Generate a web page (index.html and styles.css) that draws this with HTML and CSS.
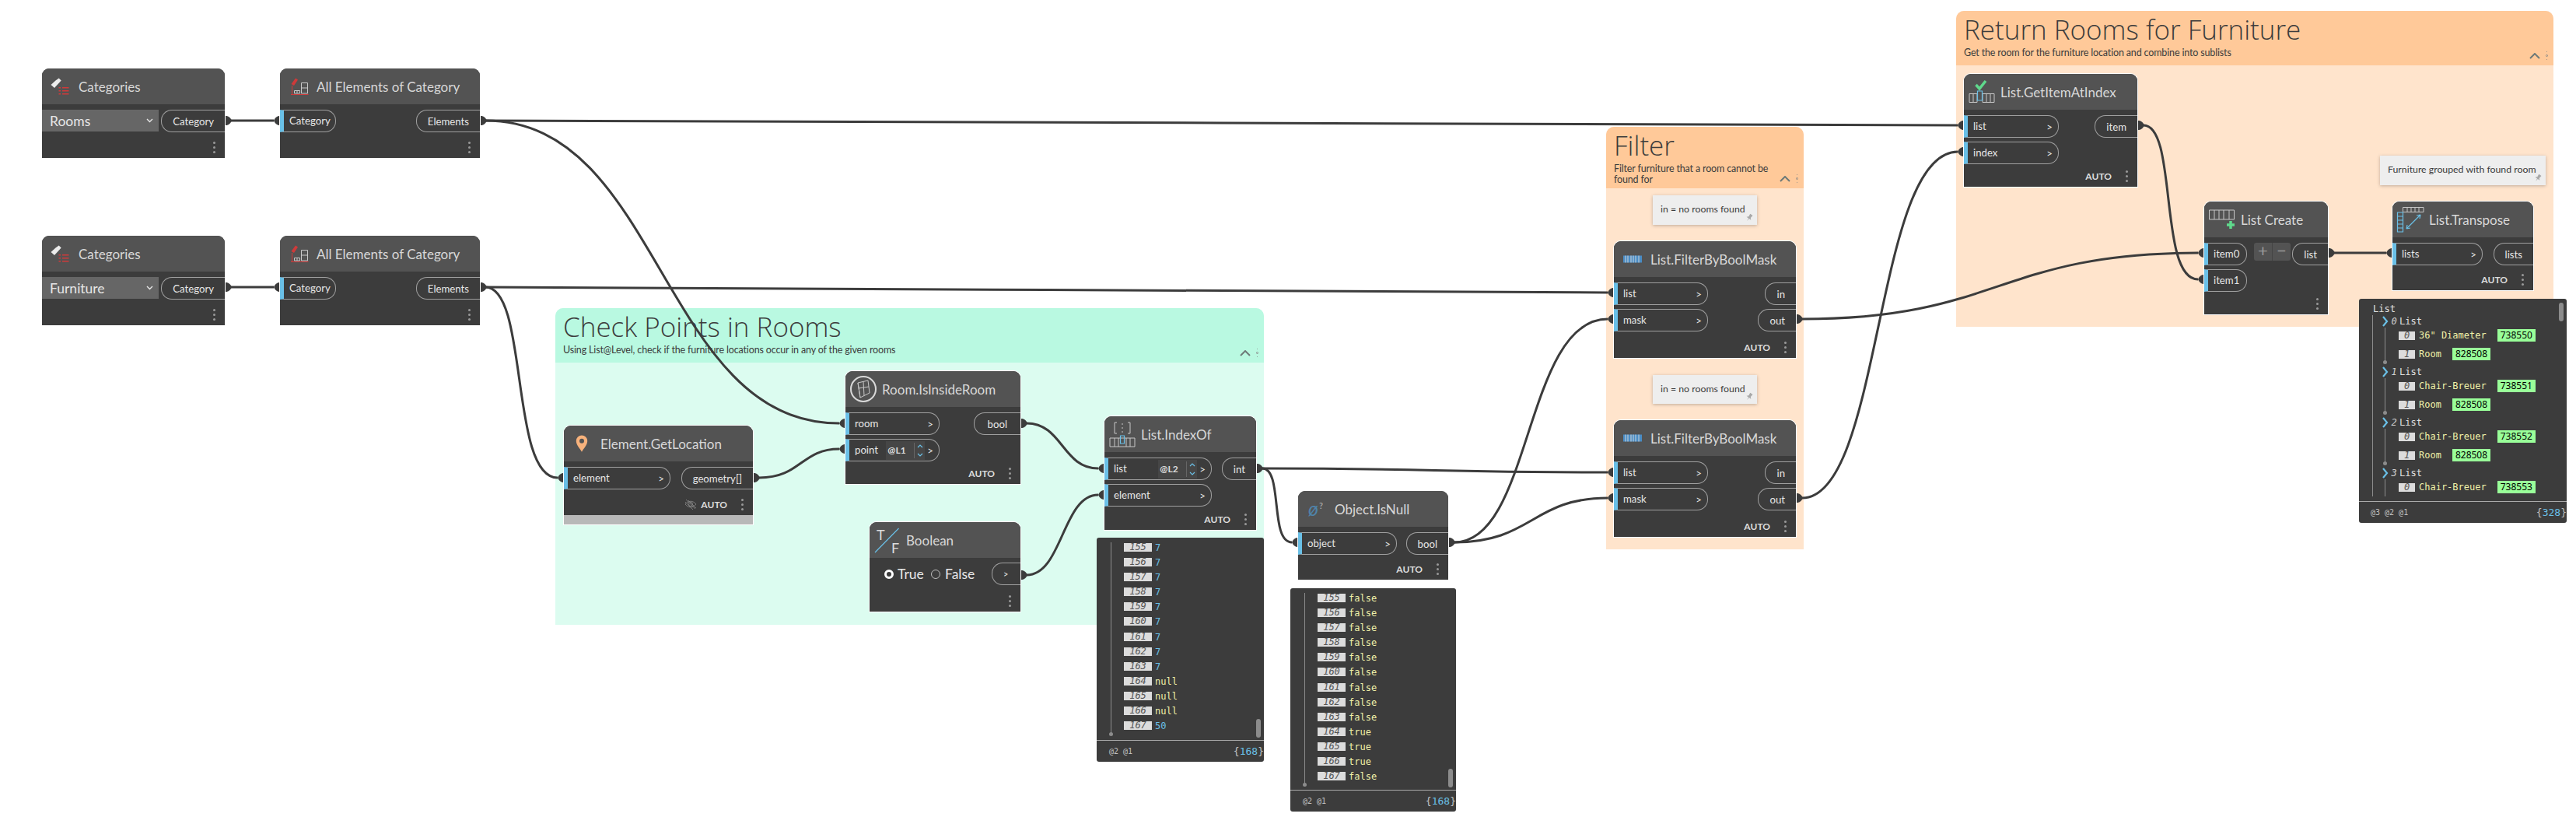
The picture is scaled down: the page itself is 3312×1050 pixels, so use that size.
FILE: index.html
```html
<!DOCTYPE html>
<html lang="en">
  <head>
    <meta charset="UTF-8" />
    <meta name="viewport" content="width=device-width" />
    <title>Return Rooms for Furniture</title>
    <link rel="stylesheet" href="styles.css">
  </head>
  <body>
    <div class="canvas">
      <!-- groups -->
      <section class="grp grp-green g-check">
        <div class="grp-head">
          <div class="grp-text">
            <h2>Check Points in Rooms</h2>
            <p>Using List@Level, check if the furniture locations occur in any of the given rooms</p>
          </div>
          <div class="grp-tools"><svg class="chev" width="14" height="8" viewBox="0 0 14 8"><path d="M1 7l6-6 6 6"/></svg><span class="grp-dots"></span></div>
        </div>
      </section>
      <section class="grp grp-orange g-filter">
        <div class="grp-head">
          <div class="grp-text">
            <h2>Filter</h2>
            <p>Filter furniture that a room cannot be<br>found for</p>
          </div>
          <div class="grp-tools"><svg class="chev" width="14" height="8" viewBox="0 0 14 8"><path d="M1 7l6-6 6 6"/></svg><span class="grp-dots"></span></div>
        </div>
      </section>
      <section class="grp grp-orange g-return">
        <div class="grp-head">
          <div class="grp-text">
            <h2>Return Rooms for Furniture</h2>
            <p>Get the room for the furniture location and combine into sublists</p>
          </div>
          <div class="grp-tools"><svg class="chev" width="14" height="8" viewBox="0 0 14 8"><path d="M1 7l6-6 6 6"/></svg><span class="grp-dots"></span></div>
        </div>
      </section>

      <!-- wires, in canvas coordinates -->
      <svg class="wires" width="3312" height="1050" viewBox="0 0 3312 1050">
        <defs>
          <path id="knob-out" d="M0-6h1.500Q6-5 8 0 6 5 1.500 6H0z"/>
          <path id="knob-in" d="M8-6H6.500Q2-5 0 0 2 5 6.500 6H8z"/>
        </defs>
        <g class="wire">
          <path d="M296 155H352"/>
          <path d="M296 369H352"/>
          <path d="M624 155C1570 155 1570 161 2517 161"/>
          <path d="M624 155C850 155 850 544 1079 544"/>
          <path d="M624 369C680 369 655 614 717 614"/>
          <path d="M624 369C1345 369 1345 376 2067 376"/>
          <path d="M976 614C1030 614 1030 577 1079 577"/>
          <path d="M1320 544C1366 544 1366 602 1412 602"/>
          <path d="M1320 739C1366 739 1366 636 1412 636"/>
          <path d="M1623 602C1845 602 1845 607 2067 607"/>
          <path d="M1623 602C1650 602 1632 697 1661 697"/>
          <path d="M1870 697C1970 697 1960 410 2067 410"/>
          <path d="M1870 697C1970 697 1970 640 2067 640"/>
          <path d="M2317 410C2570 410 2570 325 2826 325"/>
          <path d="M2317 640C2420 640 2410 195 2517 195"/>
          <path d="M2756 161C2800 161 2775 359 2826 359"/>
          <path d="M3001 325H3068"/>
        </g>
        <g class="knobs">
          <use href="#knob-out" x="290" y="155"/><use href="#knob-in" x="352" y="155"/>
          <use href="#knob-out" x="290" y="369"/><use href="#knob-in" x="352" y="369"/>
          <use href="#knob-out" x="618" y="155"/><use href="#knob-out" x="618" y="369"/>
          <use href="#knob-in" x="717" y="614"/><use href="#knob-out" x="969" y="614"/>
          <use href="#knob-in" x="1079" y="544"/><use href="#knob-in" x="1079" y="577"/>
          <use href="#knob-out" x="1313" y="544"/><use href="#knob-out" x="1313" y="739"/>
          <use href="#knob-in" x="1412" y="602"/><use href="#knob-in" x="1412" y="636"/>
          <use href="#knob-out" x="1616" y="602"/><use href="#knob-in" x="1661" y="697"/>
          <use href="#knob-out" x="1863" y="697"/>
          <use href="#knob-in" x="2067" y="376"/><use href="#knob-in" x="2067" y="410"/>
          <use href="#knob-in" x="2067" y="607"/><use href="#knob-in" x="2067" y="640"/>
          <use href="#knob-out" x="2310" y="410"/><use href="#knob-out" x="2310" y="640"/>
          <use href="#knob-in" x="2517" y="161"/><use href="#knob-in" x="2517" y="195"/>
          <use href="#knob-out" x="2749" y="161"/>
          <use href="#knob-in" x="2826" y="325"/><use href="#knob-in" x="2826" y="359"/>
          <use href="#knob-out" x="2994" y="325"/><use href="#knob-in" x="3068" y="325"/>
        </g>
      </svg>

      <!-- nodes -->
      <div class="node n-cat1">
        <div class="node-head">
          <svg class="icon" viewBox="0 0 47 46"><path class="i-white" d="M21.700 12.500l3 3L16 25l-4.500-4 6-5.500z"/><path class="i-red" d="M26 24h8.500v1.500H26zM26 28h8.500v1.500H26zM26 32h8.500v1.500H26zM21.500 24h2.500v1.500h-2.500zM21.500 28h2.500v1.500h-2.500zM21.500 32h2.500v1.500h-2.500z"/></svg>
          <span class="node-title">Categories</span>
        </div>
        <div class="node-body">
          <div class="combo">Rooms<svg width="9" height="6" viewBox="0 0 9 6"><path d="M1 1l3.500 3.500L8 1"/></svg></div>
          <div class="ports-out"><div class="port-out">Category</div></div>
        </div>
        <div class="node-foot"><span class="dots"></span></div>
      </div>
      <div class="node n-all1">
        <div class="node-head">
          <svg class="icon" viewBox="0 0 47 46"><path class="i-red" d="M20 12.500l3 2-5 7.500-3.500-2zM14 33h22.500v1H14zM15 22h1v11h-1z"/><path class="i-line" d="M27.500 18.500h8v13.500h-8zM27.500 25h8M18.500 28.500h7v3.500h-7zM22 28.500v3.500"/></svg>
          <span class="node-title">All Elements of Category</span>
        </div>
        <div class="node-body">
          <div class="ports-in"><div class="port-in w-cat">Category</div></div>
          <div class="ports-out"><div class="port-out">Elements</div></div>
        </div>
        <div class="node-foot"><span class="dots"></span></div>
      </div>
      <div class="node n-cat2">
        <div class="node-head">
          <svg class="icon" viewBox="0 0 47 46"><path class="i-white" d="M21.700 12.500l3 3L16 25l-4.500-4 6-5.500z"/><path class="i-red" d="M26 24h8.500v1.500H26zM26 28h8.500v1.500H26zM26 32h8.500v1.500H26zM21.500 24h2.500v1.500h-2.500zM21.500 28h2.500v1.500h-2.500zM21.500 32h2.500v1.500h-2.500z"/></svg>
          <span class="node-title">Categories</span>
        </div>
        <div class="node-body">
          <div class="combo">Furniture<svg width="9" height="6" viewBox="0 0 9 6"><path d="M1 1l3.500 3.500L8 1"/></svg></div>
          <div class="ports-out"><div class="port-out">Category</div></div>
        </div>
        <div class="node-foot"><span class="dots"></span></div>
      </div>
      <div class="node n-all2">
        <div class="node-head">
          <svg class="icon" viewBox="0 0 47 46"><path class="i-red" d="M20 12.500l3 2-5 7.500-3.500-2zM14 33h22.500v1H14zM15 22h1v11h-1z"/><path class="i-line" d="M27.500 18.500h8v13.500h-8zM27.500 25h8M18.500 28.500h7v3.500h-7zM22 28.500v3.500"/></svg>
          <span class="node-title">All Elements of Category</span>
        </div>
        <div class="node-body">
          <div class="ports-in"><div class="port-in w-cat">Category</div></div>
          <div class="ports-out"><div class="port-out">Elements</div></div>
        </div>
        <div class="node-foot"><span class="dots"></span></div>
      </div>

      <div class="node n-loc">
        <div class="node-head">
          <svg class="icon" viewBox="0 0 47 46"><path class="i-pin" fill-rule="evenodd" d="M23 12.500a7.200 7.200 0 0 1 7.200 7.200c0 5-4.700 9.500-7.200 14-2.500-4.500-7.200-9-7.200-14A7.200 7.200 0 0 1 23 12.500zm0 4.300a3 3 0 1 0 0 6 3 3 0 0 0 0-6z"/></svg>
          <span class="node-title">Element.GetLocation</span>
        </div>
        <div class="node-body">
          <div class="ports-in"><div class="port-in w-element">element<b>&gt;</b></div></div>
          <div class="ports-out"><div class="port-out">geometry[]</div></div>
        </div>
        <div class="node-foot">
          <svg class="eye" width="16" height="14" viewBox="0 0 16 14"><path d="M1 7c4-5 10-5 14 0-4 5-10 5-14 0zM2 1l12 12M5 2l10 10M1 4l10 10"/><circle cx="8" cy="7" r="2.500"/></svg>
          <span class="auto">AUTO</span><span class="dots"></span>
        </div>
        <div class="preview-bar"></div>
      </div>

      <div class="node n-room">
        <div class="node-head">
          <svg class="icon" viewBox="0 0 47 46"><circle class="i-ring" cx="23" cy="23" r="16"/><path class="i-line" d="M16 15l13-3 2 16-12 6zM16 15l3 19M23 13.500l1 18M17 22l13-2"/></svg>
          <span class="node-title">Room.IsInsideRoom</span>
        </div>
        <div class="node-body">
          <div class="ports-in">
            <div class="port-in w-room">room<b>&gt;</b></div>
            <div class="port-in w-room">point<span class="lacing"><em>@L1</em><svg width="10" height="20" viewBox="0 0 10 20"><path d="M2 6l3-3 3 3M2 14l3 3 3-3"/></svg></span><b class="tight">&gt;</b></div>
          </div>
          <div class="ports-out"><div class="port-out wide">bool</div></div>
        </div>
        <div class="node-foot"><span class="auto">AUTO</span><span class="dots"></span></div>
      </div>

      <div class="node n-bool">
        <div class="node-head">
          <svg class="icon" viewBox="0 0 47 46"><text x="9" y="23" class="i-tf">T</text><text x="28" y="40" class="i-tf">F</text><path class="i-blue" d="M37.500 8L7 39"/></svg>
          <span class="node-title">Boolean</span>
        </div>
        <div class="node-body body-bool">
          <div class="radios"><span class="radio on"></span><span class="radio-label">True</span><span class="radio"></span><span>False</span></div>
          <div class="ports-out"><div class="port-out bare">&gt;</div></div>
        </div>
        <div class="node-foot"><span class="dots"></span></div>
      </div>

      <div class="node n-index">
        <div class="node-head">
          <svg class="icon" viewBox="0 0 47 46"><path class="i-line" d="M16 8h-3v14h3M30 8h3v14h-3M7 28h32v11H7zM13 28v11M18 28v11M28 28v11M33 28v11"/><path class="i-dash" d="M23 9v15"/><path class="i-blue" d="M20.500 25h5v10h-5z"/></svg>
          <span class="node-title">List.IndexOf</span>
        </div>
        <div class="node-body">
          <div class="ports-in">
            <div class="port-in w-index">list<span class="lacing"><em>@L2</em><svg width="10" height="20" viewBox="0 0 10 20"><path d="M2 6l3-3 3 3M2 14l3 3 3-3"/></svg></span><b class="tight">&gt;</b></div>
            <div class="port-in w-index">element<b>&gt;</b></div>
          </div>
          <div class="ports-out"><div class="port-out">int</div></div>
        </div>
        <div class="node-foot"><span class="auto">AUTO</span><span class="dots"></span></div>
      </div>

      <div class="node n-null">
        <div class="node-head">
          <svg class="icon" viewBox="0 0 47 46"><text x="13" y="32" class="i-null">ø</text><text x="27" y="23" class="i-q">?</text></svg>
          <span class="node-title">Object.IsNull</span>
        </div>
        <div class="node-body">
          <div class="ports-in"><div class="port-in w-null">object<b>&gt;</b></div></div>
          <div class="ports-out"><div class="port-out">bool</div></div>
        </div>
        <div class="node-foot"><span class="auto">AUTO</span><span class="dots"></span></div>
      </div>

      <div class="node n-mask1">
        <div class="node-head">
          <svg class="icon" viewBox="0 0 47 46"><path class="i-bar" d="M12 18.500h24v9H12z"/><path class="i-stripes" d="M15 18.500v9M18 18.500v9M22 18.500v9M25 18.500v9M28 18.500v9M32 18.500v9"/></svg>
          <span class="node-title">List.FilterByBoolMask</span>
        </div>
        <div class="node-body">
          <div class="ports-in">
            <div class="port-in w-mask">list<b>&gt;</b></div>
            <div class="port-in w-mask">mask<b>&gt;</b></div>
          </div>
          <div class="ports-out"><div class="port-out">in</div><div class="port-out">out</div></div>
        </div>
        <div class="node-foot"><span class="auto">AUTO</span><span class="dots"></span></div>
      </div>
      <div class="node n-mask2">
        <div class="node-head">
          <svg class="icon" viewBox="0 0 47 46"><path class="i-bar" d="M12 18.500h24v9H12z"/><path class="i-stripes" d="M15 18.500v9M18 18.500v9M22 18.500v9M25 18.500v9M28 18.500v9M32 18.500v9"/></svg>
          <span class="node-title">List.FilterByBoolMask</span>
        </div>
        <div class="node-body">
          <div class="ports-in">
            <div class="port-in w-mask">list<b>&gt;</b></div>
            <div class="port-in w-mask">mask<b>&gt;</b></div>
          </div>
          <div class="ports-out"><div class="port-out">in</div><div class="port-out">out</div></div>
        </div>
        <div class="node-foot"><span class="auto">AUTO</span><span class="dots"></span></div>
      </div>

      <div class="node n-item">
        <div class="node-head">
          <svg class="icon" viewBox="0 0 47 46"><path class="i-check" d="M15.500 14l4.500 5 8-10"/><path class="i-line" d="M7 25.500h10v11H7zM24 25.500h15v11H24zM12 25.500v11M29 25.500v11M34 25.500v11"/><path class="i-blue" d="M17.500 22h6v12h-6z"/></svg>
          <span class="node-title">List.GetItemAtIndex</span>
        </div>
        <div class="node-body">
          <div class="ports-in">
            <div class="port-in w-item">list<b>&gt;</b></div>
            <div class="port-in w-item">index<b>&gt;</b></div>
          </div>
          <div class="ports-out"><div class="port-out">item</div></div>
        </div>
        <div class="node-foot"><span class="auto">AUTO</span><span class="dots"></span></div>
      </div>

      <div class="node n-create">
        <div class="node-head">
          <svg class="icon" viewBox="0 0 47 46"><path class="i-line" d="M6.500 11h32v12h-32zM13 11v12M19 11v12M25 11v12M32 11v12"/><path class="i-plus" d="M29 30h10M34 25v10"/></svg>
          <span class="node-title">List Create</span>
        </div>
        <div class="node-body">
          <div class="ports-in">
            <div class="port-in w-create">item0</div>
            <div class="port-in w-create">item1</div>
          </div>
          <div class="addrem"><span>+</span><span>−</span></div>
          <div class="ports-out"><div class="port-out">list</div></div>
        </div>
        <div class="node-foot"><span class="dots"></span></div>
      </div>

      <div class="node n-trans">
        <div class="node-head">
          <svg class="icon" viewBox="0 0 47 46"><path class="i-line" d="M13.500 7.500h26.500v6H13.500zM19 7.500v6M24 7.500v6M29 7.500v6M34 7.500v6"/><path class="i-blue" d="M6.500 14h7v25h-7zM6.500 19h7M6.500 24h7M6.500 29h7M6.500 34h7M18 35l18-18M18 35l1-5M18 35l5-1M36 17l-5 1M36 17l-1 5"/></svg>
          <span class="node-title">List.Transpose</span>
        </div>
        <div class="node-body">
          <div class="ports-in"><div class="port-in w-trans">lists<b>&gt;</b></div></div>
          <div class="ports-out"><div class="port-out">lists</div></div>
        </div>
        <div class="node-foot"><span class="auto">AUTO</span><span class="dots"></span></div>
      </div>

      <!-- notes -->
      <div class="note note-a">in = no rooms found<svg class="pin" width="12" height="12" viewBox="0 0 12 12"><path d="M4 1h4l-.5 4 2 2H6.500L6 11l-.5-4H2.500l2-2z"/></svg></div>
      <div class="note note-b">in = no rooms found<svg class="pin" width="12" height="12" viewBox="0 0 12 12"><path d="M4 1h4l-.5 4 2 2H6.500L6 11l-.5-4H2.500l2-2z"/></svg></div>
      <div class="note note-c">Furniture grouped with found room<svg class="pin" width="12" height="12" viewBox="0 0 12 12"><path d="M4 1h4l-.5 4 2 2H6.500L6 11l-.5-4H2.500l2-2z"/></svg></div>

      <!-- watch panels -->
      <div class="watch w-index-out">
        <div class="tree">
          <div class="row"><i>155</i><span class="num">7</span></div>
          <div class="row"><i>156</i><span class="num">7</span></div>
          <div class="row"><i>157</i><span class="num">7</span></div>
          <div class="row"><i>158</i><span class="num">7</span></div>
          <div class="row"><i>159</i><span class="num">7</span></div>
          <div class="row"><i>160</i><span class="num">7</span></div>
          <div class="row"><i>161</i><span class="num">7</span></div>
          <div class="row"><i>162</i><span class="num">7</span></div>
          <div class="row"><i>163</i><span class="num">7</span></div>
          <div class="row"><i>164</i><span>null</span></div>
          <div class="row"><i>165</i><span>null</span></div>
          <div class="row"><i>166</i><span>null</span></div>
          <div class="row"><i>167</i><span class="num">50</span></div>
        </div>
        <div class="thumb"></div>
        <div class="watch-foot"><span>@2 @1</span><span class="count">{<u>168</u>}</span></div>
      </div>
      <div class="watch w-null-out">
        <div class="tree">
          <div class="row"><i>155</i><span>false</span></div>
          <div class="row"><i>156</i><span>false</span></div>
          <div class="row"><i>157</i><span>false</span></div>
          <div class="row"><i>158</i><span>false</span></div>
          <div class="row"><i>159</i><span>false</span></div>
          <div class="row"><i>160</i><span>false</span></div>
          <div class="row"><i>161</i><span>false</span></div>
          <div class="row"><i>162</i><span>false</span></div>
          <div class="row"><i>163</i><span>false</span></div>
          <div class="row"><i>164</i><span>true</span></div>
          <div class="row"><i>165</i><span>true</span></div>
          <div class="row"><i>166</i><span>true</span></div>
          <div class="row"><i>167</i><span>false</span></div>
        </div>
        <div class="thumb"></div>
        <div class="watch-foot"><span>@2 @1</span><span class="count">{<u>168</u>}</span></div>
      </div>
      <div class="watch w-trans-out">
        <div class="root-label">List</div>
        <div class="root-tree">
          <div class="sub">
            <div class="sub-head"><svg width="9" height="14" viewBox="0 0 9 14"><path d="M2 1l5 6-5 6"/></svg><i>0</i><span>List</span></div>
            <div class="sub-body">
              <div class="leaf"><i>0</i><span>36" Diameter</span><mark>738550</mark></div>
              <div class="leaf"><i>1</i><span>Room</span><mark>828508</mark></div>
            </div>
          </div>
          <div class="sub">
            <div class="sub-head"><svg width="9" height="14" viewBox="0 0 9 14"><path d="M2 1l5 6-5 6"/></svg><i>1</i><span>List</span></div>
            <div class="sub-body">
              <div class="leaf"><i>0</i><span>Chair-Breuer</span><mark>738551</mark></div>
              <div class="leaf"><i>1</i><span>Room</span><mark>828508</mark></div>
            </div>
          </div>
          <div class="sub">
            <div class="sub-head"><svg width="9" height="14" viewBox="0 0 9 14"><path d="M2 1l5 6-5 6"/></svg><i>2</i><span>List</span></div>
            <div class="sub-body">
              <div class="leaf"><i>0</i><span>Chair-Breuer</span><mark>738552</mark></div>
              <div class="leaf"><i>1</i><span>Room</span><mark>828508</mark></div>
            </div>
          </div>
          <div class="sub">
            <div class="sub-head"><svg width="9" height="14" viewBox="0 0 9 14"><path d="M2 1l5 6-5 6"/></svg><i>3</i><span>List</span></div>
            <div class="sub-body open-end">
              <div class="leaf"><i>0</i><span>Chair-Breuer</span><mark>738553</mark></div>
            </div>
          </div>
        </div>
        <div class="thumb"></div>
        <div class="watch-foot"><span>@3 @2 @1</span><span class="count">{<u>328</u>}</span></div>
      </div>
    </div>
  </body>
</html>
```

FILE: styles.css
```css
* {
  box-sizing: border-box;
}

body {
  margin: 0;
  background-color: white;
  font-family: Lato, "Noto Sans", sans-serif;
  overflow: hidden;
}

.canvas {
  position: relative;
  width: 3312px;
  height: 1050px;
  overflow: hidden;
}

/* groups */
.grp {
  position: absolute;
  border-radius: 10px 10px 0 0;
}

.grp-green {
  background-color: #dcfcf0;
}

.grp-green .grp-head {
  background-color: #b9f9e1;
}

.grp-orange {
  background-color: #ffe4cc;
}

.grp-orange .grp-head {
  background-color: #ffc999;
}

.g-check {
  left: 714px;
  top: 396px;
  width: 911px;
  height: 407px;
}

.g-filter {
  left: 2065px;
  top: 163px;
  width: 254px;
  height: 543px;
}

.g-filter .grp-head {
  height: 79px;
}

.g-return {
  left: 2515px;
  top: 14px;
  width: 768px;
  height: 406px;
}

.grp-head {
  display: flex;
  height: 70px;
  padding-left: 10px;
  border-radius: 10px 10px 0 0;
}

.grp-text {
  flex: 1;
  color: #3c3c3c;
}

.grp-text h2 {
  margin: 1px 0 0;
  font-family: "Open Sans", sans-serif;
  font-size: 35px;
  font-weight: 300;
  line-height: 46px;
}

.grp-text p {
  margin: 0;
  font-size: 12.500px;
  letter-spacing: -0.15px;
  line-height: 14px;
}

.grp-tools {
  display: flex;
  align-self: flex-end;
  align-items: center;
  gap: 7px;
  padding: 0 7px 6px 0;
}

.chev path {
  fill: none;
  stroke: #6d7a78;
  stroke-width: 2;
}

.grp-dots {
  width: 3px;
  height: 3px;
  margin: 5px 0;
  border: 1px solid #888;
  border-radius: 50%;
  box-shadow: 0 -5px 0 -1px #888, 0 5px 0 -1px #888;
}

/* wires */
.wires {
  position: absolute;
  left: 0;
  top: 0;
}

.wire path {
  fill: none;
  stroke: #3c3c3c;
  stroke-width: 3;
}

.knobs {
  fill: #3c3c3c;
}

/* nodes */
.node {
  position: absolute;
  display: flex;
  flex-direction: column;
  border-radius: 9px 9px 0 0;
  background-color: #3c3c3c;
  box-shadow: 0 0 0 1px white;
  color: #e6e6e6;
}

.n-cat1 { left: 54px; top: 88px; width: 235px; height: 115px; }
.n-all1 { left: 360px; top: 88px; width: 257px; height: 115px; }
.n-cat2 { left: 54px; top: 303px; width: 235px; height: 115px; }
.n-all2 { left: 360px; top: 303px; width: 257px; height: 115px; }
.n-loc { left: 725px; top: 547px; width: 243px; height: 127px; }
.n-room { left: 1087px; top: 477px; width: 225px; height: 145px; }
.n-bool { left: 1118px; top: 671px; width: 194px; height: 115px; }
.n-index { left: 1420px; top: 535px; width: 195px; height: 146px; }
.n-null { left: 1669px; top: 631px; width: 193px; height: 114px; }
.n-mask1 { left: 2075px; top: 310px; width: 234px; height: 150px; }
.n-mask2 { left: 2075px; top: 540px; width: 234px; height: 150px; }
.n-item { left: 2525px; top: 95px; width: 223px; height: 145px; }
.n-create { left: 2834px; top: 259px; width: 159px; height: 145px; }
.n-trans { left: 3076px; top: 259px; width: 181px; height: 114px; }

.node-head {
  display: flex;
  align-items: center;
  flex: none;
  height: 46px;
  border-radius: 9px 9px 0 0;
  background-color: #535353;
}

.icon {
  flex: none;
  width: 47px;
  height: 46px;
}

.node-title {
  font-size: 17px;
  color: #d8d8d8;
  white-space: nowrap;
}

.node-body {
  display: flex;
  justify-content: space-between;
  padding-top: 7px;
}

.ports-in,
.ports-out {
  display: flex;
  flex-direction: column;
  gap: 5px;
}

.ports-out {
  align-items: flex-end;
}

.port-in,
.port-out {
  display: flex;
  align-items: center;
  height: 29px;
  border: 1px solid #a0a0a0;
  font-size: 13.200px;
}

.port-in {
  justify-content: space-between;
  padding: 0 7px 2px 7px;
  border-left: 5px solid #6ac0e7;
  border-radius: 0 14px 14px 0;
}

.port-in b {
  font-weight: 400;
  padding-top: 2px;
}

.port-out {
  padding: 0 14px;
  border-right: none;
  border-radius: 14px 0 0 14px;
}

.port-out.wide {
  padding: 0 17px;
}

.port-out.bare {
  width: 37px;
  font-size: 11px;
}

.w-cat { width: 72px; }
.w-element { width: 137px; }
.w-room { width: 121px; }
.w-index { width: 138px; }
.w-null { width: 127px; }
.w-mask { width: 121px; }
.w-item { width: 122px; }
.w-create { width: 55px; padding-right: 2px; }
.w-trans { width: 116px; }

.lacing {
  display: flex;
  align-items: center;
  justify-content: space-between;
  width: 50px;
  height: 24px;
  margin: 2px -12px 0 auto;
  padding: 0 1px 0 2px;
  background-color: #464646;
  font-size: 12px;
}

.lacing em {
  font-style: normal;
  font-weight: 700;
  color: #dcdcdc;
}

.lacing svg {
  border-left: 1px solid #666;
  box-sizing: content-box;
  padding-left: 2px;
}

.lacing path {
  fill: none;
  stroke: #6ac0e7;
  stroke-width: 1.200;
}

.port-in b.tight {
  margin-left: 15px;
}

.combo {
  display: flex;
  align-items: center;
  justify-content: space-between;
  width: 150px;
  height: 28px;
  padding: 0 7px 0 10px;
  background-color: #666;
  font-size: 17.500px;
}

.combo path {
  fill: none;
  stroke: #e6e6e6;
  stroke-width: 1.400;
}

.addrem {
  display: flex;
  align-self: flex-start;
  height: 23px;
  margin-left: 6px;
  border-radius: 3px;
  background-color: #535353;
  color: #999;
  font-size: 22px;
  line-height: 20px;
}

.addrem span {
  width: 23.500px;
  text-align: center;
}

.addrem span + span {
  border-left: 1px solid #444;
}

.body-bool {
  align-items: center;
  padding-top: 6px;
}

.radios {
  display: flex;
  align-items: center;
  padding-left: 19px;
  font-size: 17.500px;
}

.radio {
  flex: none;
  width: 12px;
  height: 12px;
  margin-right: 6px;
  border: 1px solid #bbb;
  border-radius: 50%;
}

.radio-label {
  width: 43px;
}

.radio.on {
  margin-right: 5px;
  border: 3.500px solid white;
}

.node-foot {
  display: flex;
  align-items: center;
  justify-content: flex-end;
  flex: none;
  height: 28px;
  margin-top: auto;
  padding-right: 12px;
}

.auto {
  font-size: 12px;
  font-weight: 700;
  color: #dddddd;
}

.dots {
  width: 3px;
  height: 3px;
  margin-left: 18px;
  border-radius: 50%;
  background-color: #999;
  box-shadow: 0 -6px 0 #999, 0 6px 0 #999;
}

.eye {
  margin-right: 5px;
}

.eye path,
.eye circle {
  fill: none;
  stroke: #8c8c8c;
  stroke-width: 0.800;
}

.preview-bar {
  flex: none;
  height: 12px;
  background-color: #b8b8b8;
}

/* node icons */
.i-white { fill: #ececec; }
.i-red { fill: #cf3a3a; }
.i-line { fill: none; stroke: #c8c8c8; stroke-width: 1; }
.i-ring { fill: none; stroke: #d8d8d8; stroke-width: 2; }
.i-pin { fill: #f7b27c; }
.i-blue { fill: none; stroke: #6ac0e7; stroke-width: 1.200; }
.i-dash { fill: none; stroke: #c8c8c8; stroke-dasharray: 2 3; }
.i-check { fill: none; stroke: #5fd98c; stroke-width: 3.500; }
.i-plus { fill: none; stroke: #5fd98c; stroke-width: 3.500; }
.i-bar { fill: #4a8cc4; }
.i-stripes { fill: none; stroke: #dcdcdc; stroke-width: 0.900; }

.i-tf {
  font-family: Lato, sans-serif;
  font-size: 18px;
  fill: #dcdcdc;
}

.i-null {
  font-family: Lato, sans-serif;
  font-size: 25px;
  font-style: italic;
  fill: #4f83aa;
}

.i-q {
  font-family: Lato, sans-serif;
  font-size: 11px;
  fill: #b8b8b8;
}

/* notes */
.note {
  position: absolute;
  padding-left: 10px;
  padding-top: 9px;
  background-color: #eeeeee;
  box-shadow: 0 1px 4px rgba(0, 0, 0, 0.25);
  color: #3c3c3c;
  font-size: 12.300px;
  line-height: 17px;
  white-space: nowrap;
}

.note-a { left: 2125px; top: 251px; width: 134px; height: 38px; }
.note-b { left: 2125px; top: 482px; width: 134px; height: 37px; }
.note-c { left: 3060px; top: 200px; width: 213px; height: 38px; }

.pin {
  position: absolute;
  right: 4px;
  bottom: 3px;
}

.pin path {
  fill: #a8a8a8;
  transform: rotate(35deg);
  transform-origin: center;
}

/* watch panels */
.watch {
  position: absolute;
  display: flex;
  flex-direction: column;
  border-radius: 3px;
  background-color: #3c3c3c;
  color: #f0f0a8;
  font-family: "DejaVu Sans Mono", monospace;
  font-size: 12px;
}

.w-index-out { left: 1410px; top: 691px; width: 215px; height: 288px; }
.w-null-out { left: 1659px; top: 756px; width: 213px; height: 287px; }
.w-trans-out { left: 3033px; top: 384px; width: 267px; height: 288px; }

.tree {
  position: relative;
  margin: 6px 0 0 18px;
  padding-left: 16px;
  border-left: 1px solid #8c8c8c;
}

.tree::after,
.sub-body::after {
  content: "";
  position: absolute;
  left: -3px;
  bottom: -1px;
  width: 5px;
  height: 5px;
  border-radius: 50%;
  background-color: #8c8c8c;
}

.row {
  display: flex;
  align-items: flex-start;
  gap: 4px;
  height: 19.100px;
  padding-top: 1px;
  line-height: 13px;
}

.row i,
.leaf i {
  flex: none;
  background-color: #dcdcdc;
  color: #555;
  font-size: 12px;
  line-height: 11px;
  text-align: center;
}

.row i {
  width: 36px;
  height: 11px;
}

.num {
  color: #6ac0e7;
}

.thumb {
  position: absolute;
  right: 4px;
  bottom: 31px;
  width: 6px;
  height: 24px;
  border-radius: 3px;
  background-color: #8c8c8c;
}

.w-trans-out .thumb {
  top: 5px;
  bottom: auto;
}

.watch-foot {
  display: flex;
  align-items: center;
  justify-content: space-between;
  flex: none;
  height: 28px;
  margin-top: auto;
  padding-left: 16px;
  border-top: 1px solid #aaa;
  color: #c0c0c0;
  font-size: 10px;
}

.w-trans-out .watch-foot {
  padding-left: 15px;
}

.count {
  color: #c0c0c0;
  font-size: 13px;
}

.count u {
  color: #6ac0e7;
  text-decoration: none;
}

.root-label {
  height: 20px;
  padding: 4px 0 0 18px;
  color: #e0e0e0;
  line-height: 18px;
}

.root-tree {
  height: 233px;
  margin: 1px 0 0 17px;
  border-left: 1px solid #8c8c8c;
  overflow: hidden;
}

.sub {
  height: 65px;
}

.sub-head {
  display: flex;
  align-items: center;
  gap: 3px;
  height: 16px;
  padding-left: 11px;
  color: #e0e0e0;
}

.sub-head path {
  fill: none;
  stroke: #6ac0e7;
  stroke-width: 2.200;
}

.sub-head i {
  width: 8px;
  color: #d0d0d0;
  font-size: 12px;
  text-align: center;
}

.sub-body {
  position: relative;
  margin-left: 15px;
  padding-left: 17px;
  border-left: 1px solid #8c8c8c;
  height: 46px;
}

.leaf {
  display: flex;
  align-items: center;
  height: 20px;
  margin-bottom: 4px;
}

.leaf i {
  width: 21px;
  height: 11px;
  margin-right: 5px;
}

.leaf mark {
  margin-left: 14px;
  padding: 0 4px;
  background-color: #99ff99;
  color: black;
  font-family: "Noto Sans", sans-serif;
  font-size: 12px;
  line-height: 16.500px;
}

.open-end::after {
  display: none;
}
```
